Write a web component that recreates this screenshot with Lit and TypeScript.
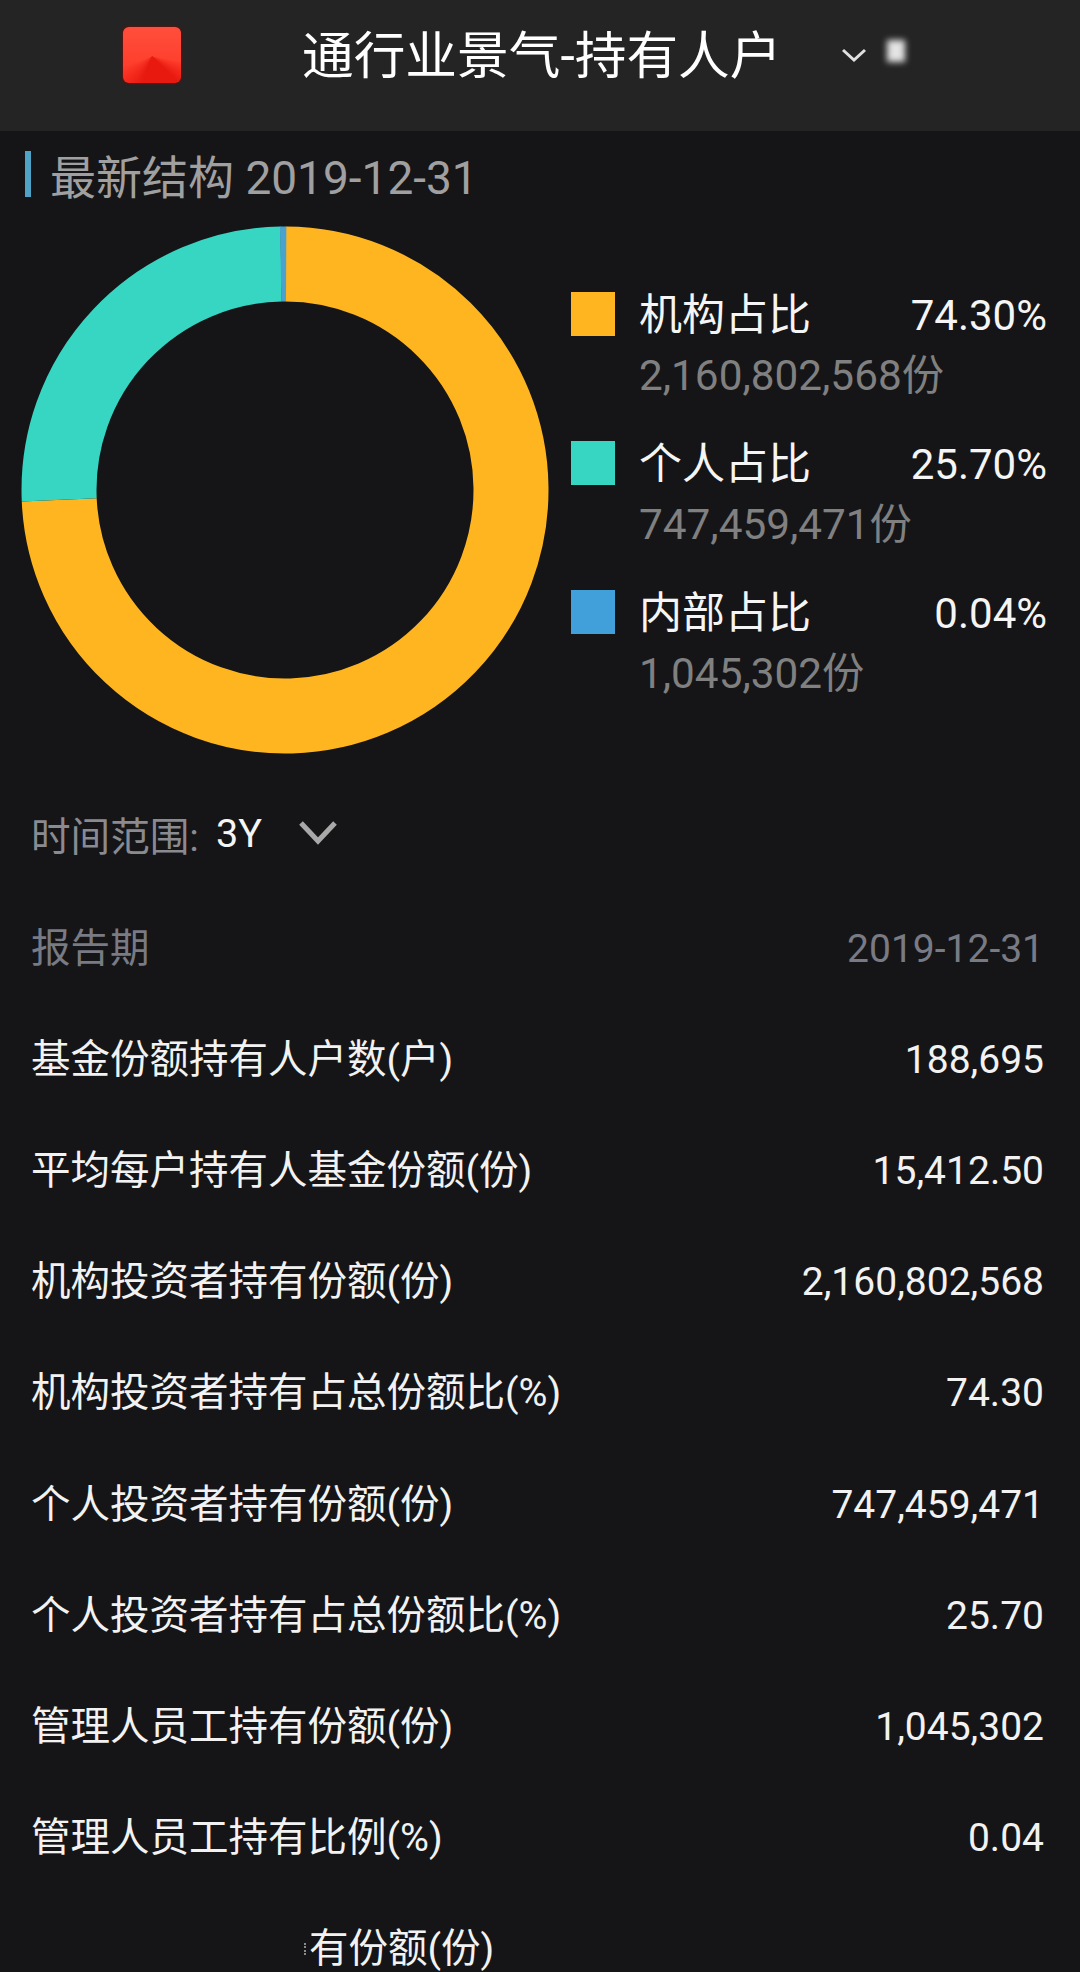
import { LitElement, html, css, svg } from "lit";
import { customElement } from "lit/decorators.js";

const legend = [
  { color: "#ffb51f", name: "机构占比", pct: "74.30%", shares: "2,160,802,568份" },
  { color: "#36d6c3", name: "个人占比", pct: "25.70%", shares: "747,459,471份" },
  { color: "#419fd9", name: "内部占比", pct: "0.04%", shares: "1,045,302份" },
];

const rows = [
  ["基金份额持有人户数(户)", "188,695"],
  ["平均每户持有人基金份额(份)", "15,412.50"],
  ["机构投资者持有份额(份)", "2,160,802,568"],
  ["机构投资者持有占总份额比(%)", "74.30"],
  ["个人投资者持有份额(份)", "747,459,471"],
  ["个人投资者持有占总份额比(%)", "25.70"],
  ["管理人员工持有份额(份)", "1,045,302"],
  ["管理人员工持有比例(%)", "0.04"],
];

// Donut arcs: [color, start degrees, end degrees], clockwise from 12 o'clock.
const slices: [string, number, number][] = [
  ["#ffb51f", 0.2, 267.5],
  ["#36d6c3", 267.5, 359],
  ["#4aa3cf", 358.9, 360.3],
];

function arc(cx: number, cy: number, r: number, a0: number, a1: number) {
  const p = (a: number) => {
    const t = ((a - 90) * Math.PI) / 180;
    return `${(cx + r * Math.cos(t)).toFixed(2)} ${(cy + r * Math.sin(t)).toFixed(2)}`;
  };
  return `M${p(a0)} A${r} ${r} 0 ${a1 - a0 > 180 ? 1 : 0} 1 ${p(a1)}`;
}

@customElement("app-root")
export class AppRoot extends LitElement {
  static styles = css`
    :host {
      display: block;
      width: 1080px;
      height: 1972px;
      overflow: hidden;
      background: #151518;
      font-family: Roboto, "Noto Sans CJK SC", sans-serif;
      color: #f2f2f2;
    }
    .header {
      position: relative;
      height: 131px;
      background: #242424;
      display: flex;
      align-items: flex-start;
      padding: 27px 0 0 123px;
      box-sizing: border-box;
    }
    .logo {
      width: 58px;
      height: 56px;
      border-radius: 6px;
      box-shadow: 0 0 2px 1px #5e1411;
      background:
        conic-gradient(from 135deg at 50% 52%, #e8190f 0 65deg, rgba(232, 25, 15, 0) 115deg 325deg, #e8190f 360deg),
        linear-gradient(180deg, #ff4f3c, #ff3626);
    }
    .title {
      margin: 0 0 0 121px;
      font-size: 51.7px;
      line-height: 60px;
      color: #fff;
      white-space: nowrap;
    }
    .chev-small {
      margin: 21px 0 0 61px;
      width: 24px;
      height: 14px;
      flex: none;
    }
    .smudge {
      position: absolute;
      left: 887px;
      top: 40px;
      width: 18px;
      height: 22px;
      background: #e4e4e4;
      filter: blur(3px);
    }
    .section {
      display: flex;
      align-items: center;
      margin: 20px 0 0 25px;
      height: 46px;
      gap: 19px;
      font-size: 46px;
      color: #a0a0a0;
      white-space: nowrap;
    }
    .section i {
      width: 6px;
      height: 46px;
      background: #4fa3c4;
    }
    .overview {
      display: flex;
      margin-top: 29px;
      padding-left: 21px;
    }
    .donut {
      width: 528px;
      height: 528px;
      flex: none;
    }
    .legend {
      margin: 61px 0 0 22px;
      width: 476px;
      display: flex;
      flex-direction: column;
      gap: 29px;
    }
    .item {
      display: grid;
      grid-template-columns: 44px 1fr auto;
      column-gap: 24px;
      height: 120px;
    }
    .swatch {
      width: 44px;
      height: 44px;
      margin-top: 5px;
    }
    .name,
    .pct {
      font-size: 42px;
      line-height: 54px;
      margin-top: 2px;
      color: #f5f5f5;
    }
    .name {
      font-size: 43px;
      margin-top: 1px;
    }
    .shares {
      grid-column: 2 / 4;
      font-size: 42.3px;
      line-height: 52px;
      margin-top: 2px;
      color: #808080;
      white-space: nowrap;
    }
    .range {
      display: flex;
      align-items: center;
      height: 60px;
      margin: 49px 0 0 31px;
      font-size: 39.6px;
      color: #8a8b90;
    }
    .range b {
      font-weight: 400;
      color: #f5f5f5;
      margin-left: 17px;
    }
    .range svg {
      width: 40px;
      height: 28px;
      margin-left: 36px;
    }
    .rows {
      margin-top: 30px;
      padding: 0 36px 0 31px;
    }
    .row {
      display: flex;
      justify-content: space-between;
      align-items: center;
      height: 111.2px;
      font-size: 39.5px;
      line-height: 44px;
      color: #f2f2f2;
      white-space: nowrap;
    }
    .row .val {
      font-size: 39px;
    }
    .row.muted {
      color: #797b84;
    }
    .row.cut {
      padding-left: 273px;
      justify-content: flex-start;
      gap: 3px;
    }
    .row.cut::before {
      content: "";
      width: 0;
      height: 12px;
      border-left: 2px dotted #8a8a8a;
    }
  `;

  render() {
    return html`
      <div class="header">
        <div class="logo"></div>
        <div class="title">通行业景气-持有人户</div>
        <svg class="chev-small" viewBox="0 0 24 14" fill="none" stroke="#e0e0e0" stroke-width="3">
          <path d="M1 2 L12 12 L23 2"></path>
        </svg>
        <div class="smudge"></div>
      </div>
      <div class="section"><i></i><span>最新结构 2019-12-31</span></div>
      <div class="overview">
        <svg class="donut" viewBox="0 0 528 528" fill="none" stroke-width="75">
          ${slices.map(([c, a, b]) => svg`<path d=${arc(264, 264, 226, a, b)} stroke=${c}></path>`)}
        </svg>
        <div class="legend">
          ${legend.map(
            (l) => html`
              <div class="item">
                <div class="swatch" style="background:${l.color}"></div>
                <div class="name">${l.name}</div>
                <div class="pct">${l.pct}</div>
                <div></div>
                <div class="shares">${l.shares}</div>
              </div>
            `
          )}
        </div>
      </div>
      <div class="range">
        <span>时间范围:</span><b>3Y</b>
        <svg viewBox="0 0 40 28" fill="none" stroke="#a8a8a8" stroke-width="5">
          <path d="M3 4 L20 22 L37 4"></path>
        </svg>
      </div>
      <div class="rows">
        <div class="row muted"><span>报告期</span><span class="val">2019-12-31</span></div>
        ${rows.map(([k, v]) => html`<div class="row"><span>${k}</span><span class="val">${v}</span></div>`)}
        <div class="row cut"><span>有份额(份)</span></div>
      </div>
    `;
  }
}
